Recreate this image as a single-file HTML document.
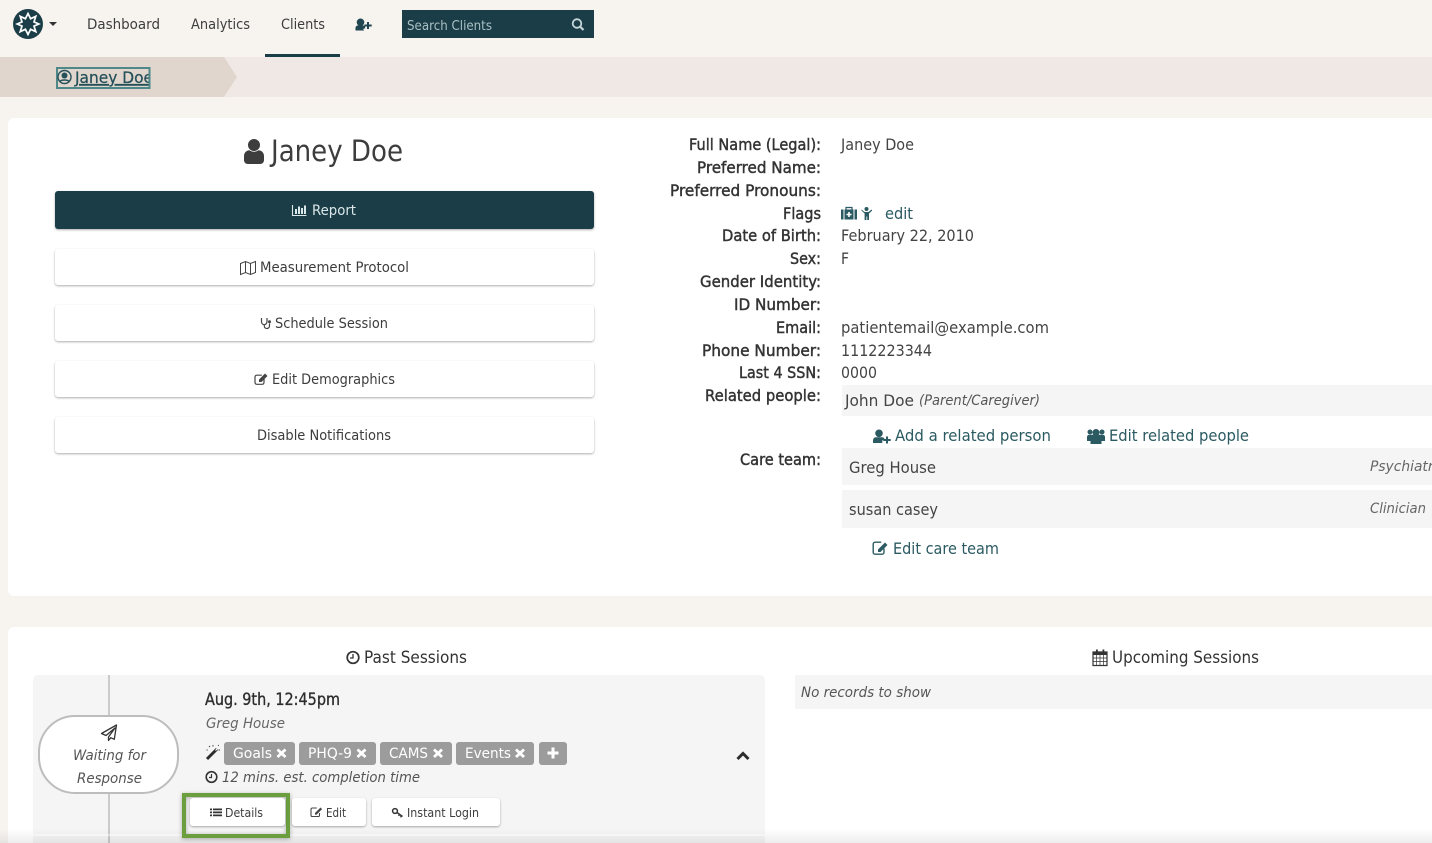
<!DOCTYPE html>
<html lang="en">
<head>
<meta charset="utf-8">
<title>Janey Doe</title>
<style>
html,body{margin:0;padding:0;width:1432px;height:843px;overflow:hidden;background:#f7f4f0}
svg{display:block}
text{font-family:"DejaVu Sans","Liberation Sans",sans-serif;fill:#3d3d3d;font-size:14.5px}
.l{stroke:#333;stroke-width:.45px;fill:#333;font-size:16px}
.v{font-size:16px;fill:#444}
.a{font-size:16px;fill:#2b5a62}
.b{font-size:14px}
.i{font-style:italic}
.t{fill:#fff;font-size:14.5px}
.btn{filter:drop-shadow(0 1.5px 1px rgba(0,0,0,.32))}
</style>
</head>
<body>
<svg width="1432" height="843" viewBox="0 0 1432 843">
<defs>
<linearGradient id="fade" x1="0" y1="0" x2="0" y2="1"><stop offset="0" stop-color="#000" stop-opacity="0"/><stop offset="1" stop-color="#000" stop-opacity=".07"/></linearGradient>
<clipPath id="crumb"><rect x="57" y="68" width="92" height="20"/></clipPath>
</defs>
<rect width="1432" height="843" fill="#f7f4f0"/>

<!-- nav -->
<circle cx="28" cy="24" r="15" fill="#1b3d47"/>
<path d="M28 13.500l2.600 5.200 5.200-2.400-1.800 5.600 4.800 2.100-4.800 2.100 1.800 5.600-5.200-2.400L28 34.500l-2.600-5.200-5.200 2.400 1.800-5.600-4.800-2.100 4.800-2.100-1.800-5.600 5.200 2.400z" fill="none" stroke="#fff" stroke-width="1.700"/>
<path d="M49 22h8l-4 4z" fill="#333"/>
<text x="87" y="29" textLength="73" lengthAdjust="spacingAndGlyphs">Dashboard</text>
<text x="191" y="29" textLength="59" lengthAdjust="spacingAndGlyphs">Analytics</text>
<text x="281" y="29" textLength="44" lengthAdjust="spacingAndGlyphs">Clients</text>
<rect x="265" y="54" width="75" height="3" fill="#1b3d47"/>
<path d="M360.500 18.500a3.800 3.800 0 1 1 0 7.600 3.800 3.800 0 0 1 0-7.600zM355.500 30.500V28c0-1.500 1.200-2.500 2.500-2.500h5c1 0 1.700.4 2.100 1v2h-1.600v2.500h.5v-.5z" fill="#1f4650"/>
<path d="M368 22v7M364.300 25.500h7.400" stroke="#1f4650" stroke-width="2"/>
<rect x="402" y="10" width="192" height="28" fill="#1b3d47"/>
<text x="407" y="30" textLength="85" lengthAdjust="spacingAndGlyphs" style="fill:#a9c0c4;font-size:13.500px">Search Clients</text>
<circle cx="577" cy="23.500" r="4.300" fill="none" stroke="#c5d5d8" stroke-width="1.800"/>
<path d="M580 26.500l3.500 3.500" stroke="#c5d5d8" stroke-width="2.200"/>

<!-- breadcrumb -->
<rect x="0" y="57" width="1432" height="40" fill="#efe8e4"/>
<path d="M0 57h224l13 20-13 20H0z" fill="#e0d6ce"/>
<g clip-path="url(#crumb)">
<text x="75" y="83" textLength="78" lengthAdjust="spacingAndGlyphs" style="fill:#245059;font-size:16px;text-decoration:underline;stroke:#245059;stroke-width:.25px">Janey Doe</text>
</g>
<rect x="57" y="68" width="92.500" height="20" fill="none" stroke="#4e8888" stroke-width="2"/>
<circle cx="64.500" cy="77" r="6.500" fill="none" stroke="#245059" stroke-width="1.400"/>
<circle cx="64.500" cy="75.500" r="3" fill="#245059"/>
<path d="M60 81.500c1-2 8-2 9 0" fill="none" stroke="#245059" stroke-width="1.500"/>

<!-- profile panel -->
<rect x="8" y="118" width="1440" height="478" rx="6" fill="#fff"/>
<path d="M254 139a6 6 0 1 1 0 12 6 6 0 0 1 0-12zM244 160v-4c0-3.200 2.500-5.700 5.500-5.700 1.300 1 2.800 1.500 4.500 1.500s3.200-.5 4.500-1.500c3 0 5.500 2.500 5.500 5.700v4c0 2.400-1.600 4-4 4h-12c-2.400 0-4-1.600-4-4z" fill="#3d3d3d"/>
<text x="271" y="161" textLength="132" lengthAdjust="spacingAndGlyphs" style="font-size:29px">Janey Doe</text>

<rect class="btn" x="55" y="191" width="539" height="38" rx="3" fill="#1b3d47"/>
<path d="M292.500 205v10.500h14" fill="none" stroke="#dbe8ea" stroke-width="1.100"/>
<path d="M295 209h2v5h-2zM298 206.500h2v7.500h-2zM301 208h2v6h-2zM304 205.500h2v8.500h-2z" fill="#dbe8ea"/>
<text x="312" y="215" textLength="44" lengthAdjust="spacingAndGlyphs" class="b" style="fill:#dbe8ea">Report</text>

<g class="btn"><rect x="55" y="249" width="539" height="36" rx="3" fill="#fff"/><rect x="55" y="305" width="539" height="36" rx="3" fill="#fff"/><rect x="55" y="361" width="539" height="36" rx="3" fill="#fff"/><rect x="55" y="417" width="539" height="36" rx="3" fill="#fff"/></g>

<path d="M240.500 263.500l5-2 5 2 5-2v11l-5 2-5-2-5 2zM245.500 261.500v11M250.500 263.500v11" fill="none" stroke="#444" stroke-width="1"/>
<text x="260" y="272" textLength="149" lengthAdjust="spacingAndGlyphs" class="b">Measurement Protocol</text>

<path d="M261.500 318v3.500c0 2 1.300 3.200 2.700 3.200s2.800-1.200 2.800-3.200V318M264.300 324.700v1.300c0 1.600 1.200 2.500 2.500 2.500 1.600 0 2.700-1 2.700-2.700v-2.300" fill="none" stroke="#444" stroke-width="1.200"/>
<circle cx="269.500" cy="321.800" r="1.500" fill="#444"/>
<text x="275" y="328" textLength="113" lengthAdjust="spacingAndGlyphs" class="b">Schedule Session</text>

<path d="M264 379v3.500a1.800 1.800 0 0 1-1.800 1.800h-5.400a1.800 1.800 0 0 1-1.800-1.800V377a1.800 1.800 0 0 1 1.800-1.800h5" fill="none" stroke="#444" stroke-width="1.200"/>
<path d="M259 379.500l6-6 2.500 2.500-6 6H259z" fill="#444"/>
<text x="272" y="384" textLength="123" lengthAdjust="spacingAndGlyphs" class="b">Edit Demographics</text>

<text x="257" y="440" textLength="134" lengthAdjust="spacingAndGlyphs" class="b">Disable Notifications</text>

<!-- details labels -->
<text class="l" x="689" y="150" textLength="132" lengthAdjust="spacingAndGlyphs">Full Name (Legal):</text>
<text class="l" x="697" y="173" textLength="124" lengthAdjust="spacingAndGlyphs">Preferred Name:</text>
<text class="l" x="670" y="196" textLength="151" lengthAdjust="spacingAndGlyphs">Preferred Pronouns:</text>
<text class="l" x="783" y="219" textLength="38" lengthAdjust="spacingAndGlyphs">Flags</text>
<text class="l" x="722" y="241" textLength="99" lengthAdjust="spacingAndGlyphs">Date of Birth:</text>
<text class="l" x="790" y="264" textLength="31" lengthAdjust="spacingAndGlyphs">Sex:</text>
<text class="l" x="700" y="287" textLength="121" lengthAdjust="spacingAndGlyphs">Gender Identity:</text>
<text class="l" x="734" y="310" textLength="87" lengthAdjust="spacingAndGlyphs">ID Number:</text>
<text class="l" x="776" y="333" textLength="45" lengthAdjust="spacingAndGlyphs">Email:</text>
<text class="l" x="702" y="356" textLength="119" lengthAdjust="spacingAndGlyphs">Phone Number:</text>
<text class="l" x="739" y="378" textLength="82" lengthAdjust="spacingAndGlyphs">Last 4 SSN:</text>
<text class="l" x="705" y="401" textLength="116" lengthAdjust="spacingAndGlyphs">Related people:</text>
<text class="l" x="740" y="465" textLength="81" lengthAdjust="spacingAndGlyphs">Care team:</text>

<!-- values -->
<text class="v" x="841" y="150" textLength="73" lengthAdjust="spacingAndGlyphs">Janey Doe</text>
<path d="M841 209.500h2.500v10H841zM854.500 209.500h2.500v10h-2.500zM844.500 209.500h9v10h-9z" fill="#2b5a62"/>
<path d="M846 209.500v-2h6v2" fill="none" stroke="#2b5a62" stroke-width="1.200"/>
<path d="M849 212v5M846.500 214.500h5" stroke="#fff" stroke-width="1.600"/>
<circle cx="866.500" cy="209" r="2" fill="#2b5a62"/>
<path d="M861.500 209.500l3 2.500h4l3-2.500 .7 1-3.200 3v6.500h-1.800v-3.500h-.8v3.500h-1.800V213.500l-3.200-3z" fill="#2b5a62"/>
<text class="a" x="885" y="219" textLength="28" lengthAdjust="spacingAndGlyphs">edit</text>
<text class="v" x="841" y="241" textLength="133" lengthAdjust="spacingAndGlyphs">February 22, 2010</text>
<text class="v" x="841" y="264" textLength="8" lengthAdjust="spacingAndGlyphs">F</text>
<text class="v" x="841" y="333" textLength="208" lengthAdjust="spacingAndGlyphs">patientemail@example.com</text>
<text class="v" x="841" y="356" textLength="91" lengthAdjust="spacingAndGlyphs">1112223344</text>
<text class="v" x="841" y="378" textLength="36" lengthAdjust="spacingAndGlyphs">0000</text>

<rect x="842" y="385" width="590" height="31" fill="#f5f5f5"/>
<text class="v" x="845" y="406" textLength="69" lengthAdjust="spacingAndGlyphs">John Doe</text>
<text class="i" x="919" y="405" textLength="121" lengthAdjust="spacingAndGlyphs" style="font-size:14px;fill:#555">(Parent/Caregiver)</text>

<path d="M879 429.500a3.800 3.800 0 1 1 0 7.600 3.800 3.800 0 0 1 0-7.600zM873 443v-2.500c0-2 1.400-3.300 3-3.300h6c1 0 1.800.4 2.300 1v2h-2v2.800z" fill="#2b5a62"/>
<path d="M887 436.500v7M883.300 440h7.400" stroke="#2b5a62" stroke-width="2"/>
<text class="a" x="895" y="441" textLength="156" lengthAdjust="spacingAndGlyphs">Add a related person</text>
<circle cx="1096" cy="432.500" r="3.500" fill="#2b5a62"/><circle cx="1090" cy="432" r="2.500" fill="#2b5a62"/><circle cx="1102" cy="432" r="2.500" fill="#2b5a62"/>
<path d="M1087 441v-4c0-1.500 1-2.300 2.500-2.300h13c1.500 0 2.500.8 2.500 2.300v4h-3.500v3h-11v-3z" fill="#2b5a62"/>
<text class="a" x="1109" y="441" textLength="140" lengthAdjust="spacingAndGlyphs">Edit related people</text>

<rect x="842" y="448" width="590" height="37" fill="#f5f5f5"/>
<rect x="842" y="490" width="590" height="38" fill="#f5f5f5"/>
<text class="v" x="849" y="473" textLength="87" lengthAdjust="spacingAndGlyphs">Greg House</text>
<text class="i" x="1370" y="471" textLength="80" lengthAdjust="spacingAndGlyphs" style="font-size:14px;fill:#666">Psychiatrist</text>
<text class="v" x="849" y="515" textLength="89" lengthAdjust="spacingAndGlyphs">susan casey</text>
<text class="i" x="1370" y="513" textLength="56" lengthAdjust="spacingAndGlyphs" style="font-size:14px;fill:#666">Clinician</text>
<path d="M884 548.500v3.700a2 2 0 0 1-2 2h-6.800a2 2 0 0 1-2-2v-8a2 2 0 0 1 2-2h6" fill="none" stroke="#2b5a62" stroke-width="1.400"/>
<path d="M878 549.500l7-7 2.500 2.500-7 7H878z" fill="#2b5a62"/>
<text class="a" x="893" y="554" textLength="106" lengthAdjust="spacingAndGlyphs">Edit care team</text>

<!-- sessions panel -->
<rect x="8" y="627" width="1440" height="230" rx="6" fill="#fff"/>
<circle cx="353" cy="657.500" r="5.800" fill="none" stroke="#333" stroke-width="1.700"/>
<path d="M353 654v4h-3" fill="none" stroke="#333" stroke-width="1.300"/>
<text x="364" y="663" textLength="103" lengthAdjust="spacingAndGlyphs" style="font-size:16.500px;fill:#333">Past Sessions</text>
<path d="M1093 652h14v13.500h-14z" fill="none" stroke="#333" stroke-width="1.200"/>
<path d="M1093 651.500h14v3.500h-14zM1096 649.500h1.800v3.500H1096zM1102.500 649.500h1.800v3.500h-1.800z" fill="#333"/>
<path d="M1093 658h14M1093 661.500h14M1096.500 655v10M1100 655v10M1103.500 655v10" stroke="#333" stroke-width=".7"/>
<text x="1112" y="663" textLength="147" lengthAdjust="spacingAndGlyphs" style="font-size:16.500px;fill:#333">Upcoming Sessions</text>

<rect x="33" y="675" width="732" height="175" rx="5" fill="#f5f5f5"/>
<rect x="795" y="675" width="637" height="34" fill="#f5f5f5"/>
<text class="i" x="801" y="697" textLength="130" lengthAdjust="spacingAndGlyphs" style="font-size:14px;fill:#555">No records to show</text>

<path d="M109 675v40M109 794v49" stroke="#bdbdbd" stroke-width="1.500"/>
<rect x="39" y="716" width="139" height="77" rx="36" fill="#fff" stroke="#bdbdbd" stroke-width="2"/>
<path d="M116.500 725l-15 8.500 4.500 2 9-7.500-6.500 9v3.500l2.300-2.800 3.500 1.600z" fill="none" stroke="#333" stroke-width="1.300" stroke-linejoin="round"/>
<text class="i" x="73" y="760" textLength="73" lengthAdjust="spacingAndGlyphs" style="font-size:14.500px;fill:#555">Waiting for</text>
<text class="i" x="77" y="783" textLength="65" lengthAdjust="spacingAndGlyphs" style="font-size:14.500px;fill:#555">Response</text>

<text x="205" y="705" textLength="135" lengthAdjust="spacingAndGlyphs" style="font-size:16.500px;fill:#2d2d2d;stroke:#2d2d2d;stroke-width:.35px">Aug. 9th, 12:45pm</text>
<text class="i" x="206" y="728" textLength="79" lengthAdjust="spacingAndGlyphs" style="font-size:14.500px;fill:#666">Greg House</text>

<path d="M207 759l10-10" stroke="#2d2d2d" stroke-width="3"/>
<path d="M215.500 750.500l2-2" stroke="#fff" stroke-width="1.200"/>
<path d="M209 746l1 1M213 745v1.500M218 745l.8.800M220 750h-1.500M206.500 750h1.200" stroke="#444" stroke-width="1"/>

<g fill="#9c9c9c">
<rect x="224" y="742" width="71" height="23" rx="3"/>
<rect x="299" y="742" width="77" height="23" rx="3"/>
<rect x="380" y="742" width="72" height="23" rx="3"/>
<rect x="456" y="742" width="78" height="23" rx="3"/>
<rect x="539" y="742" width="28" height="23" rx="3"/>
</g>
<text class="t" x="233" y="758" textLength="39" lengthAdjust="spacingAndGlyphs">Goals</text>
<text class="t" x="308" y="758" textLength="44" lengthAdjust="spacingAndGlyphs">PHQ-9</text>
<text class="t" x="389" y="758" textLength="39" lengthAdjust="spacingAndGlyphs">CAMS</text>
<text class="t" x="465" y="758" textLength="46" lengthAdjust="spacingAndGlyphs">Events</text>
<path d="M277.500 749.500l8 7.500M285.500 749.500l-8 7.500M357.500 749.500l8 7.500M365.500 749.500l-8 7.500M434 749.500l8 7.500M442 749.500l-8 7.500M516 749.500l8 7.500M524 749.500l-8 7.500" stroke="#fff" stroke-width="2.800"/>
<path d="M553 747.500v11M547.500 753h11" stroke="#fff" stroke-width="3"/>

<circle cx="211.500" cy="777" r="5.300" fill="none" stroke="#333" stroke-width="1.600"/>
<path d="M211.500 774v3.500h-2.500" fill="none" stroke="#333" stroke-width="1.200"/>
<text class="i" x="222" y="782" textLength="198" lengthAdjust="spacingAndGlyphs" style="font-size:14.500px;fill:#555">12 mins. est. completion time</text>

<path d="M737.500 759l5.500-5.500 5.500 5.500" fill="none" stroke="#2d2d2d" stroke-width="3"/>

<!-- bottom shading -->
<rect x="0" y="829" width="1432" height="14" fill="url(#fade)"/>
<rect x="33" y="834" width="732" height="2" fill="#fff" opacity=".45"/>

<rect x="184" y="795" width="104" height="41" fill="none" stroke="#6b9e3c" stroke-width="4" style="filter:drop-shadow(0 1px 2px rgba(0,0,0,.3))"/>
<g class="btn" fill="#fff">
<rect x="190" y="798" width="95" height="28" rx="3"/>
<rect x="292" y="798" width="74" height="28" rx="3"/>
<rect x="372" y="798" width="128" height="28" rx="3"/>
</g>
<path d="M210 808.500h2v1.800h-2zM210 811.500h2v1.800h-2zM210 814.500h2v1.800h-2zM213 808.500h9v1.800h-9zM213 811.500h9v1.800h-9zM213 814.500h9v1.800h-9z" fill="#333"/>
<text x="225" y="817" textLength="38" lengthAdjust="spacingAndGlyphs" style="font-size:12.500px">Details</text>
<path d="M319.500 813v2.200a1.300 1.300 0 0 1-1.300 1.300h-5.900a1.300 1.300 0 0 1-1.300-1.300v-5.900a1.300 1.300 0 0 1 1.300-1.300h4.500" fill="none" stroke="#444" stroke-width="1.100"/>
<path d="M315 813l5.500-5.500 1.600 1.600-5.500 5.500H315z" fill="#444"/>
<text x="326" y="817" textLength="20" lengthAdjust="spacingAndGlyphs" style="font-size:12.500px">Edit</text>
<circle cx="395" cy="811" r="2.400" fill="none" stroke="#333" stroke-width="1.500"/>
<path d="M397 812.500l5.500 4M399.500 814.500l-1 1.300M401.500 816l-1 1.300" stroke="#333" stroke-width="1.400"/>
<text x="407" y="817" textLength="72" lengthAdjust="spacingAndGlyphs" style="font-size:12.500px">Instant Login</text>
</svg>
</body>
</html>
